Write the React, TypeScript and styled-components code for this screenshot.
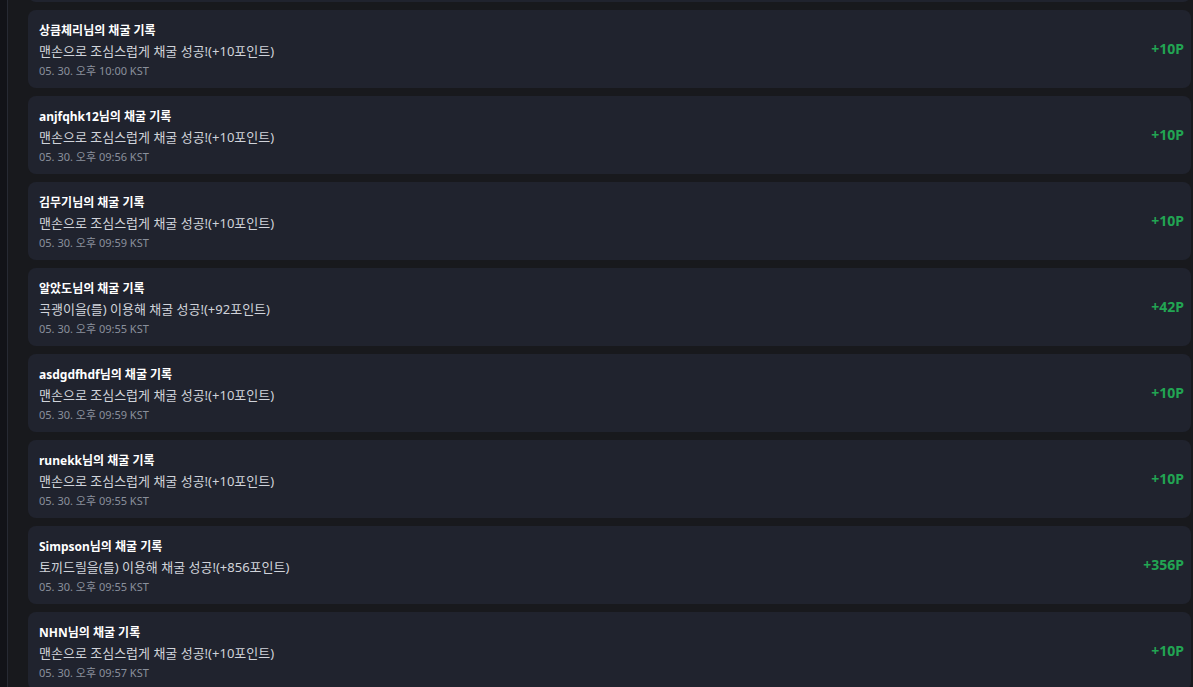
import React, { useLayoutEffect, useRef } from 'react';
import styled, { createGlobalStyle } from 'styled-components';

type Log = {
  user: string;
  message: string;
  time: string;
  point: number;
};

const LOGS: Log[] = [
  { user: '민트초코', message: '맨손으로 조심스럽게 채굴 성공!(+10포인트)', time: '05. 30. 오후 10:01 KST', point: 10 },
  { user: '상큼체리', message: '맨손으로 조심스럽게 채굴 성공!(+10포인트)', time: '05. 30. 오후 10:00 KST', point: 10 },
  { user: 'anjfqhk12', message: '맨손으로 조심스럽게 채굴 성공!(+10포인트)', time: '05. 30. 오후 09:56 KST', point: 10 },
  { user: '김무기', message: '맨손으로 조심스럽게 채굴 성공!(+10포인트)', time: '05. 30. 오후 09:59 KST', point: 10 },
  { user: '알았도', message: '곡괭이을(를) 이용해 채굴 성공!(+92포인트)', time: '05. 30. 오후 09:55 KST', point: 42 },
  { user: 'asdgdfhdf', message: '맨손으로 조심스럽게 채굴 성공!(+10포인트)', time: '05. 30. 오후 09:59 KST', point: 10 },
  { user: 'runekk', message: '맨손으로 조심스럽게 채굴 성공!(+10포인트)', time: '05. 30. 오후 09:55 KST', point: 10 },
  { user: 'Simpson', message: '토끼드릴을(를) 이용해 채굴 성공!(+856포인트)', time: '05. 30. 오후 09:55 KST', point: 356 },
  { user: 'NHN', message: '맨손으로 조심스럽게 채굴 성공!(+10포인트)', time: '05. 30. 오후 09:57 KST', point: 10 },
];

function App() {
  const scrollRef = useRef<HTMLDivElement>(null);

  // the screenshot is taken a bit scrolled down
  useLayoutEffect(() => {
    if (scrollRef.current) scrollRef.current.scrollTop = 76;
  }, []);

  return (
    <>
      <GlobalStyle />
      <Page>
        <Side />
        <Main ref={scrollRef}>
          <List>
            {LOGS.map((log, idx) => (
              <Card key={idx}>
                <Info>
                  <Title>{log.user}님의 채굴 기록</Title>
                  <Message>{log.message}</Message>
                  <Time>{log.time}</Time>
                </Info>
                <Point>+{log.point}P</Point>
              </Card>
            ))}
          </List>
        </Main>
      </Page>
    </>
  );
}

export default App;

const GlobalStyle = createGlobalStyle`
  html, body {
    margin: 0;
    padding: 0;
    background: #18191d;
  }
  body {
    font-family: "Noto Sans", "Noto Sans CJK KR", sans-serif;
    overflow: hidden;
  }
`;

const Page = styled.div`
  display: flex;
  height: 687px;
  background: #18191d;
`;

const Side = styled.div`
  width: 7px;
  flex-shrink: 0;
  background: #121318;
  border-right: 1px solid #272a33;
`;

const Main = styled.div`
  flex: 1;
  height: 100%;
  overflow: hidden;
  padding: 0 2px 0 20px;
`;

const List = styled.div`
  display: flex;
  flex-direction: column;
  gap: 8px;
  padding-bottom: 20px;
`;

const Card = styled.div`
  display: flex;
  align-items: center;
  justify-content: space-between;
  height: 78px;
  box-sizing: border-box;
  padding: 11px 7px 7px 11px;
  background: #20232e;
  border-radius: 8px;
`;

const Info = styled.div`
  display: flex;
  flex-direction: column;
  gap: 1px;
`;

const Title = styled.div`
  color: #ffffff;
  font-size: 12px;
  font-weight: 700;
  line-height: 18px;
`;

const Message = styled.div`
  color: #d0d3da;
  font-size: 13px;
  line-height: 20px;
`;

const Time = styled.div`
  color: #8a909c;
  font-size: 11px;
  line-height: 18px;
`;

const Point = styled.div`
  color: #22a553;
  font-size: 14px;
  font-weight: 700;
  margin-top: -6px;
`;
